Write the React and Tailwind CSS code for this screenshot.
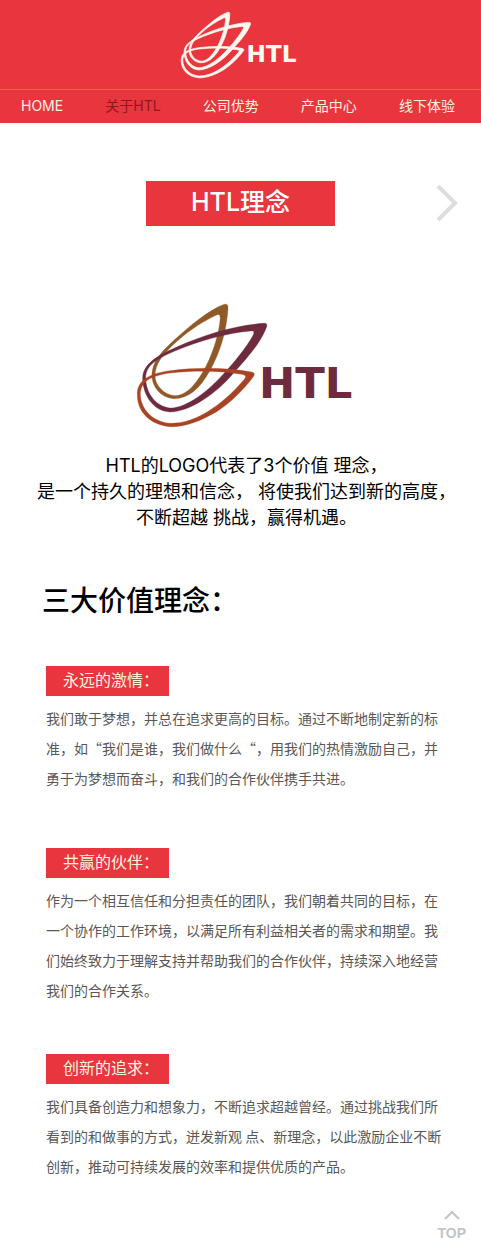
const NAV_ITEMS = ["HOME", "关于HTL", "公司优势", "产品中心", "线下体验"];

const VALUES = [
  {
    title: "永远的激情：",
    text: "我们敢于梦想，并总在追求更高的目标。通过不断地制定新的标准，如“我们是谁，我们做什么“，用我们的热情激励自己，并勇于为梦想而奋斗，和我们的合作伙伴携手共进。",
  },
  {
    title: "共赢的伙伴：",
    text: "作为一个相互信任和分担责任的团队，我们朝着共同的目标，在一个协作的工作环境，以满足所有利益相关者的需求和期望。我们始终致力于理解支持并帮助我们的合作伙伴，持续深入地经营我们的合作关系。",
  },
  {
    title: "创新的追求：",
    text: "我们具备创造力和想象力，不断追求超越曾经。通过挑战我们所看到的和做事的方式，迸发新观 点、新理念，以此激励企业不断创新，推动可持续发展的效率和提供优质的产品。",
  },
];

function Logo({ className, brown, purple, orange, strokeWidth }) {
  return (
    <svg viewBox="51 42 666 369" className={className} role="img" aria-label="HTL" overflow="visible">
      <g fillRule="evenodd" strokeWidth={strokeWidth}>
        <path
          fill={brown}
          stroke={brown}
          d="M313 43C325 41 325 47 323 70C317 130 300 190 268 245C240 295 205 327 160 326C120 322 98 290 96 262C94 215 125 185 165 148C210 108 265 60 313 43Z M288 76C299 70 302 76 300 92C295 140 275 200 249 245C222 290 195 317 165 317C130 314 106 285 105 258C105 220 130 191 172 153C215 115 255 92 288 76Z"
        />
        <path
          fill={purple}
          stroke={purple}
          d="M430 100C442 99 443 104 437 118C420 160 385 200 340 250C290 310 210 366 150 366C100 364 68 315 68 265C68 215 130 190 175 169C250 135 350 105 430 100Z M392 123C403 122 404 126 398 138C380 170 345 215 311 251C265 303 200 354 150 354C108 350 78 310 77 265C77 226 110 206 170 181C240 152 320 129 392 123Z"
        />
        <path
          fill={orange}
          stroke={orange}
          d="M394 246C405 248 405 254 399 262C370 300 330 340 290 365C240 395 190 412 150 410C90 405 52 365 52 315C50 270 90 250 150 242C230 232 320 232 394 246Z M365 253C378 255 380 260 372 269C345 300 315 330 275 357C235 385 190 401 150 400C95 395 63 355 61 315C61 276 90 257 150 249C220 241 300 241 365 253Z"
        />
      </g>
      <text x="417" y="323" fill={purple} fontSize="130" fontWeight="700" fontFamily="'DejaVu Sans', sans-serif">
        HTL
      </text>
    </svg>
  );
}

export default function App() {
  return (
    <div lang="zh-CN" className="bg-white font-['Inter','Noto_Sans_CJK_SC',sans-serif] text-black">
      <header className="bg-[#e8353e] text-[#fff3e0]">
        <div className="flex justify-center pt-3 pb-[11px]">
          <Logo className="h-[66px] w-[119px]" brown="#fffaf0" purple="#fffaf0" orange="#fffaf0" strokeWidth={4} />
        </div>
        <nav className="flex justify-between border-t border-[#ec5a4e] pr-[26px] pb-0.5 pl-[21px] text-sm leading-[31px]">
          {NAV_ITEMS.map((item, i) => (
            <a key={item} href="#" className={i === 1 ? "text-[#8b1a1f]" : ""} aria-current={i === 1 ? "page" : undefined}>
              {item}
            </a>
          ))}
        </nav>
      </header>

      <main>
        <div className="mt-[58px] grid grid-cols-[1fr_auto_1fr] items-center">
          <h1 className="col-start-2 w-[189px] bg-[#e8353e] pb-[3px] text-center text-[25px] leading-[42px] font-medium text-white">
            HTL理念
          </h1>
          <button type="button" aria-label="下一页" className="mr-[23px] justify-self-end">
            <svg viewBox="0 0 22 38" className="h-[38px] w-[22px]" fill="none" stroke="#dcdddd" strokeWidth="4">
              <path d="M2 1L19 18L2 35" />
            </svg>
          </button>
        </div>

        <div className="mt-[78px] flex justify-center pl-[14px]">
          <Logo className="h-[123px] w-[222px]" brown="#8f5a28" purple="#6d2b3d" orange="#a84424" strokeWidth={1} />
        </div>

        <p className="mt-[26px] pl-3 text-center text-lg leading-[26px]">
          HTL的LOGO代表了3个价值 理念，
          <br />
          是一个持久的理想和信念， 将使我们达到新的高度，
          <br />
          不断超越 挑战，赢得机遇。
        </p>

        <h2 className="mt-[50px] pl-[42px] text-[28px] leading-[40px] font-medium">三大价值理念：</h2>

        <div className="mt-[45px] flex flex-col gap-[49px] pr-[35px] pl-[46px] font-['Noto_Sans_CJK_SC',sans-serif]">
          {VALUES.map(({ title, text }) => (
            <section key={title} className="first:mb-[6px]">
              <h3 className="w-[123px] bg-[#e8353e] pb-1 pl-[17px] text-base leading-[26px] text-[#fff3e0]">{title}</h3>
              <p className="pt-[7px] text-sm leading-[30px] text-[#595757]">{text}</p>
            </section>
          ))}
        </div>
      </main>

      <footer className="flex justify-end pt-[29px] pr-[15px] pb-3">
        <a
          href="#"
          className="flex flex-col items-center gap-[5px] font-['Liberation_Sans',sans-serif] text-sm leading-4 font-bold text-[#c4c4c5]"
        >
          <svg viewBox="0 0 16 10" className="h-[10px] w-4" fill="none" stroke="#c4c4c5" strokeWidth="2" aria-hidden="true">
            <path d="M1 9L8 2L15 9" />
          </svg>
          TOP
        </a>
      </footer>
    </div>
  );
}
